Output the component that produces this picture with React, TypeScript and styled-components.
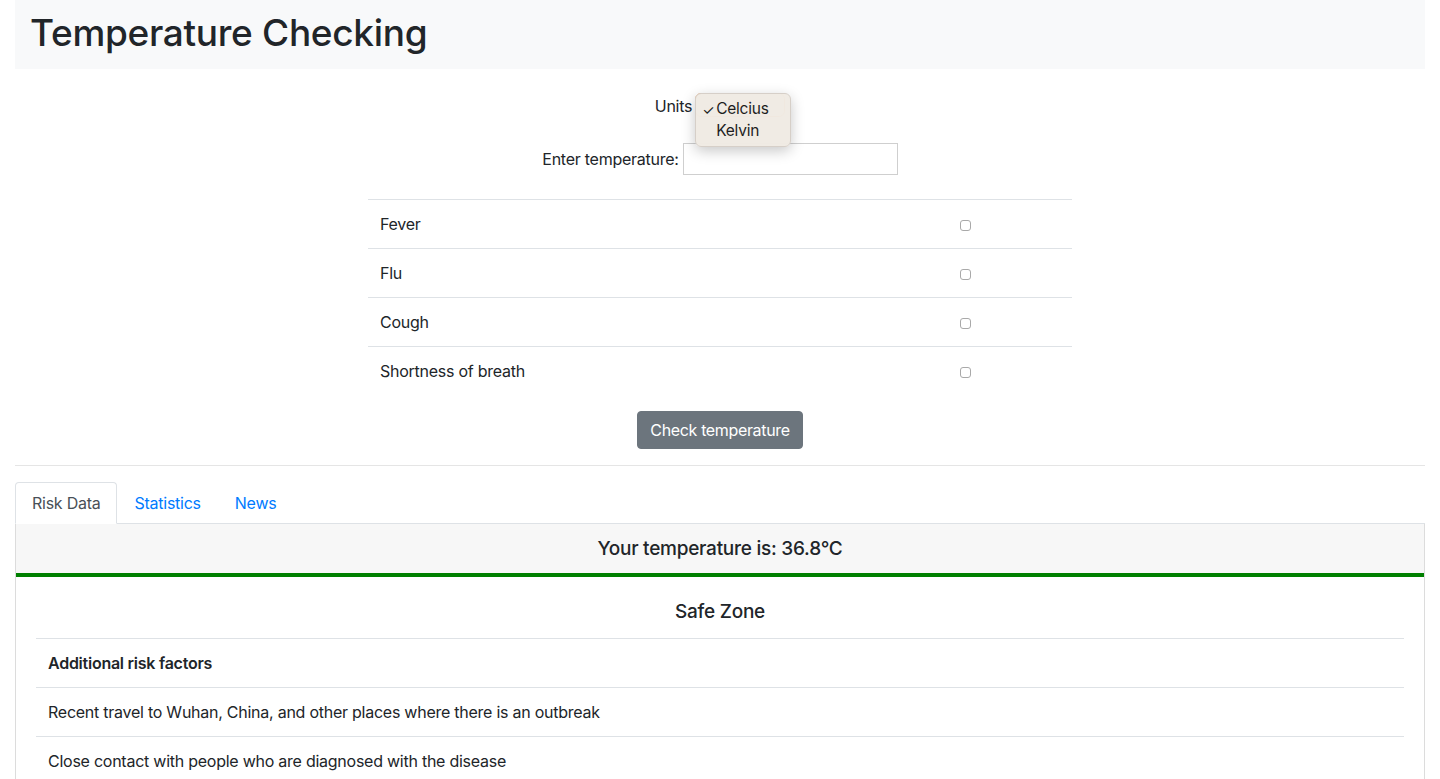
import styled, { createGlobalStyle } from "styled-components";

const GlobalStyle = createGlobalStyle`
    * {
        box-sizing: border-box;
    }
    body {
        margin: 0;
        font-family: Inter, "Noto Sans", "Liberation Sans", sans-serif;
        font-size: 16px;
        line-height: 1.5;
        letter-spacing: -0.25px;
        color: #212529;
        background: #fff;
    }
`;

const Page = styled.div`
    padding: 0 15px 40px;
`;

const Header = styled.header`
    background-color: #f8f9fa;
    padding: 9px 15px 12px;
`;

const Title = styled.h1`
    margin: 0;
    font-size: 37px;
    font-weight: 500;
    line-height: 48px;
    letter-spacing: -0.3px;
`;

const Form = styled.div`
    display: flex;
    flex-direction: column;
    align-items: center;
`;

const UnitsRow = styled.div`
    display: flex;
    align-items: center;
    gap: 3px;
    margin-top: 24px;
    height: 26px;
`;

const SelectWrap = styled.div`
    position: relative;
    width: 90px;
    height: 24px;
    border: 1px solid #e9a56b;
    border-radius: 6px;
    background: #fff;
    margin-top: -2px;
`;

const Menu = styled.div`
    position: absolute;
    top: -1px;
    left: -1px;
    width: 96px;
    padding: 4px 0 4px;
    background: rgba(240, 234, 227, 0.97);
    border: 1px solid #d6cfc8;
    border-radius: 6px;
    box-shadow: 0 4px 14px rgba(0, 0, 0, 0.22);
    z-index: 5;
`;

const MenuItem = styled.div`
    display: flex;
    align-items: center;
    height: 22px;
    padding-left: 6px;
    font-size: 15.5px;
    color: #1e1e1e;
`;

const Check = styled.span<{ visible?: boolean }>`
    display: inline-flex;
    width: 14px;
    visibility: ${props => (props.visible ? "visible" : "hidden")};
    font-size: 14px;
`;

const EnterRow = styled.div`
    display: flex;
    align-items: center;
    gap: 4px;
    margin-top: 24px;
`;

const TextInput = styled.input`
    width: 215px;
    height: 32px;
    border: 1px solid #cfcfcf;
    border-radius: 0;
    padding: 0 6px;
    font: inherit;
`;

const Table = styled.div`
    width: 704px;
    margin-top: 24px;
`;

const Row = styled.div`
    display: grid;
    grid-template-columns: 1fr 190px;
    align-items: center;
    padding: 12px;
    border-top: 1px solid #dee2e6;
`;

const CheckCell = styled.div`
    display: flex;
    justify-content: center;
    padding-top: 2px;
`;

const Checkbox = styled.input`
    appearance: none;
    width: 11px;
    height: 11px;
    margin: 0;
    border: 1px solid #a9a9a9;
    border-radius: 3px;
    background: #fff;
`;

const Button = styled.button`
    margin-top: 16px;
    padding: 6px 12px;
    border: 1px solid #6c757d;
    border-radius: 4px;
    background-color: #6c757d;
    color: #fff;
    font: inherit;
    letter-spacing: -0.35px;
    line-height: 24px;
`;

const Divider = styled.hr`
    margin: 16px 0;
    border: 0;
    border-top: 1px solid #e5e5e5;
`;

const Tabs = styled.nav`
    display: flex;
    border-bottom: 1px solid #dee2e6;
`;

const Tab = styled.a<{ active?: boolean }>`
    display: block;
    padding: 8px 16px;
    margin-bottom: -1px;
    border: 1px solid transparent;
    border-color: ${props => (props.active ? "#dee2e6 #dee2e6 #fff" : "transparent")};
    border-top-left-radius: 4px;
    border-top-right-radius: 4px;
    background: ${props => (props.active ? "#fff" : "transparent")};
    color: ${props => (props.active ? "#495057" : "#007bff")};
    text-decoration: none;
`;

const Card = styled.section`
    border: 1px solid #dcdcdc;
    border-top: 0;
    border-radius: 0 0 4px 4px;
`;

const CardHeader = styled.div`
    padding: 12px 20px;
    background-color: #f7f7f7;
    text-align: center;
    font-size: 19px;
    font-weight: 500;
    line-height: 25px;
    border-bottom: 4px solid #008000;
`;

const CardBody = styled.div`
    padding: 23px 20px 20px;
`;

const ZoneTitle = styled.h5`
    margin: 0 0 14px;
    text-align: center;
    font-size: 19px;
    font-weight: 500;
    line-height: 24px;
`;

const FactorRow = styled.div<{ bold?: boolean }>`
    padding: 12px;
    border-top: 1px solid #dee2e6;
    font-weight: ${props => (props.bold ? 600 : 400)};
`;

const symptoms = ["Fever", "Flu", "Cough", "Shortness of breath"];
const factors = [
    "Recent travel to Wuhan, China, and other places where there is an outbreak",
    "Close contact with people who are diagnosed with the disease",
];

export default function App() {
    return (
        <>
            <GlobalStyle />
            <Page>
                <Header>
                    <Title>Temperature Checking</Title>
                </Header>

                <Form>
                    <UnitsRow>
                        <span>Units</span>
                        <SelectWrap>
                            <Menu>
                                <MenuItem>
                                    <Check visible>✓</Check>Celcius
                                </MenuItem>
                                <MenuItem>
                                    <Check>✓</Check>Kelvin
                                </MenuItem>
                            </Menu>
                        </SelectWrap>
                    </UnitsRow>

                    <EnterRow>
                        <span>Enter temperature:</span>
                        <TextInput type="text" />
                    </EnterRow>

                    <Table>
                        {symptoms.map(s => (
                            <Row key={s}>
                                <span>{s}</span>
                                <CheckCell>
                                    <Checkbox type="checkbox" />
                                </CheckCell>
                            </Row>
                        ))}
                    </Table>

                    <Button>Check temperature</Button>
                </Form>

                <Divider />

                <Tabs>
                    <Tab active>Risk Data</Tab>
                    <Tab>Statistics</Tab>
                    <Tab>News</Tab>
                </Tabs>

                <Card>
                    <CardHeader>Your temperature is: 36.8°C</CardHeader>
                    <CardBody>
                        <ZoneTitle>Safe Zone</ZoneTitle>
                        <FactorRow bold>Additional risk factors</FactorRow>
                        {factors.map(f => (
                            <FactorRow key={f}>{f}</FactorRow>
                        ))}
                    </CardBody>
                </Card>
            </Page>
        </>
    );
}
